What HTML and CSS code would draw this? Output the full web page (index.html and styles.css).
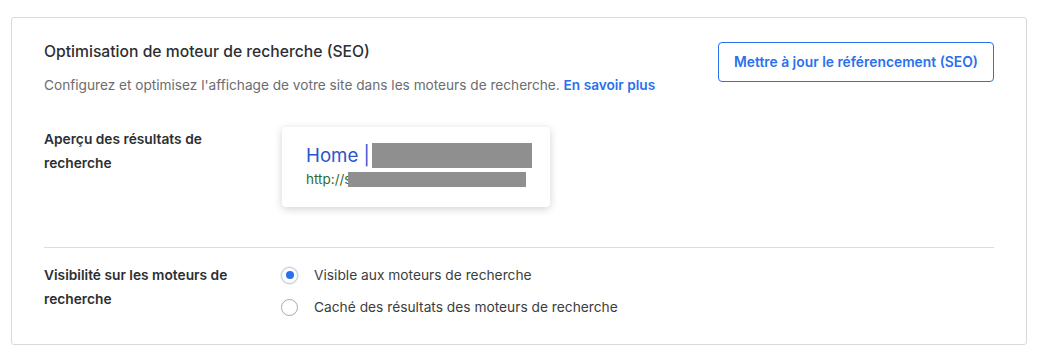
FILE: index.html
```html
<!DOCTYPE html>
<html lang="fr">
<head>
<meta charset="utf-8">
<title>SEO</title>
<link rel="stylesheet" href="styles.css">
</head>
<body>
<section class="card">
  <div class="header">
    <div class="intro">
      <h2 class="title">Optimisation de moteur de recherche (SEO)</h2>
      <p class="subtitle">Configurez et optimisez l'affichage de votre site dans les moteurs de recherche. <a class="link" href="#">En savoir plus</a></p>
    </div>
    <button class="btn" type="button">Mettre à jour le référencement (SEO)</button>
  </div>

  <div class="row preview-row">
    <div class="label">Aperçu des résultats de recherche</div>
    <div class="preview">
      <div class="p-title">Home |<span class="mask mask-title"></span></div>
      <div class="p-url">http://s<span class="mask mask-url"></span></div>
    </div>
  </div>

  <hr class="divider">

  <div class="row visibility-row">
    <div class="label">Visibilité sur les moteurs de recherche</div>
    <div class="options">
      <label class="option"><span class="radio checked"></span><span>Visible aux moteurs de recherche</span></label>
      <label class="option"><span class="radio"></span><span>Caché des résultats des moteurs de recherche</span></label>
    </div>
  </div>
</section>
</body>
</html>
```

FILE: styles.css
```css
* { box-sizing: border-box; }
html, body { margin: 0; padding: 0; background: #ffffff; }
body {
  padding: 17px 15px 0 11px;
  font-family: Inter, Roboto, "Liberation Sans", Arial, sans-serif;
  color: #333538;
}
.card {
  border: 1px solid #d9d9d9;
  border-radius: 3px;
  padding: 24px 32px 24px 32px;
  height: 328px;
}
.header {
  display: flex;
  justify-content: space-between;
  align-items: flex-start;
}
.title {
  margin: 0;
  font-size: 15.7px;
  line-height: 20px;
  font-weight: 500;
  color: #2d2f33;
}
.subtitle {
  margin: 13px 0 0;
  font-size: 13.65px;
  line-height: 20px;
  color: #6b6d70;
}
.link {
  color: #2a70ee;
  font-weight: 600;
  text-decoration: none;
}
.btn {
  width: 276px;
  height: 40px;
  margin-top: 0;
  border: 1px solid #2a70ee;
  border-radius: 4px;
  background: #fff;
  color: #2a70ee;
  font-family: inherit;
  font-size: 13.85px;
  font-weight: 600;
  cursor: pointer;
}
.row {
  display: grid;
  grid-template-columns: 238px 1fr;
}
.preview-row { margin-top: 32px; }
.label {
  max-width: 200px;
  font-size: 13.75px;
  line-height: 24px;
  font-weight: 600;
  color: #2d2f33;
}
.preview {
  width: 268px;
  height: 80px;
  border-radius: 4px;
  background: #fff;
  box-shadow: 0 2px 8px rgba(0,0,0,0.18);
  padding: 15px 18px 0 24px;
}
.p-title {
  display: flex;
  align-items: center;
  height: 26px;
  font-size: 18.7px;
  color: #2a55cc;
  white-space: nowrap;
}
.mask {
  display: inline-block;
  background: #8f8f8f;
}
.mask-title { width: 162px; height: 25px; margin-left: 2px; }
.p-url {
  display: flex;
  align-items: center;
  height: 18px;
  margin-top: 2px;
  font-size: 13.5px;
  color: #2e6b2e;
  white-space: nowrap;
}
.mask-url { width: 178px; height: 15px; margin-left: -4px; }
.divider {
  margin: 40px 0 0;
  border: 0;
  border-top: 1px solid #dcdcdc;
}
.visibility-row { margin-top: 15px; }
.options {
  display: flex;
  flex-direction: column;
  gap: 8px;
  margin-left: -1px;
}
.option {
  display: flex;
  align-items: center;
  gap: 16px;
  height: 24px;
  font-size: 13.75px;
  color: #3b3d40;
}
.radio {
  width: 17px;
  height: 17px;
  border: 1px solid #a8a8a8;
  border-radius: 50%;
  display: inline-flex;
  align-items: center;
  justify-content: center;
  flex: none;
}
.radio.checked { border-color: #b9c7dc; box-shadow: 0 0 0 1px rgba(42,112,238,0.12); }
.radio.checked::after {
  content: "";
  width: 8px;
  height: 8px;
  border-radius: 50%;
  background: #2a6ff0;
}
```
